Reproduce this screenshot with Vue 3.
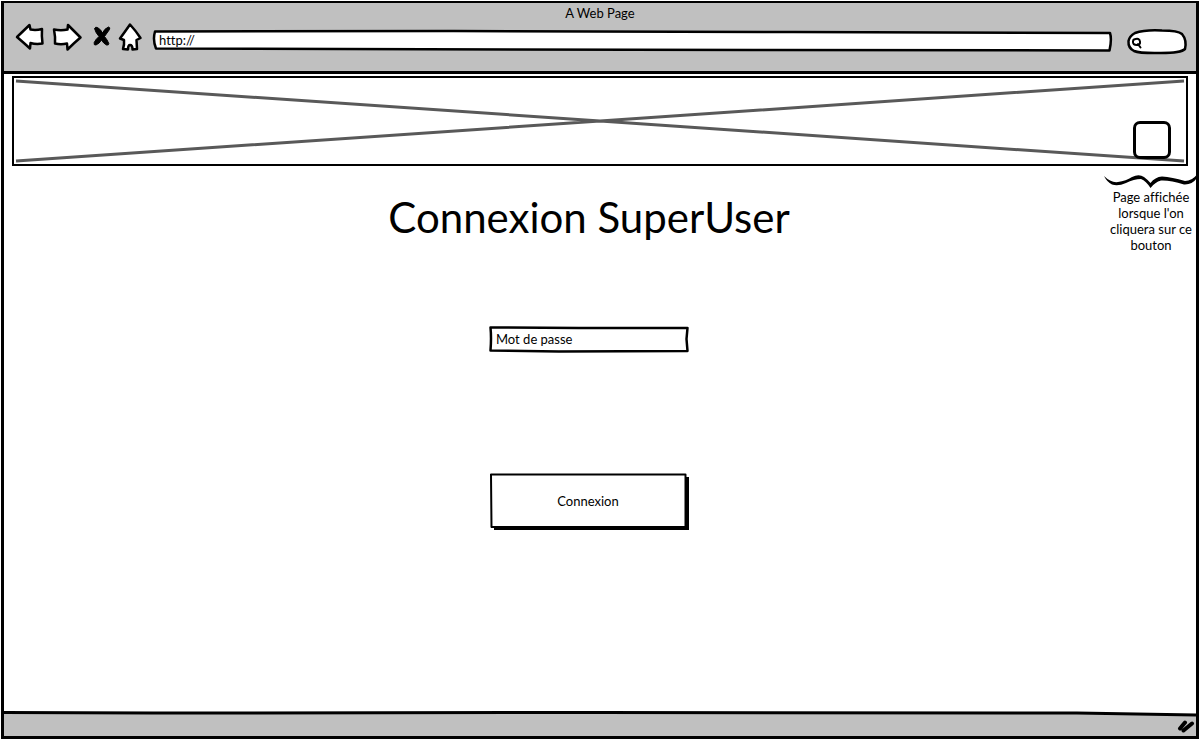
<script setup>
import { ref } from 'vue'

const address = ref('http://')
const query = ref('')
const password = ref('')
</script>

<template>
  <div class="window">
    <header class="chrome">
      <div class="title">A Web Page</div>
      <div class="toolbar">
        <nav class="nav" aria-label="Navigation">
          <button type="button" aria-label="Back">
            <svg width="30" height="28" viewBox="0 0 30 28">
              <path d="M2 14 L14.500 2 L15.500 6.500 Q21 7.500 27 6 Q26.500 13 27.500 20.500 Q21 21.500 15.500 20 L15 25.500 Q9 20 2 14Z" />
            </svg>
          </button>
          <button type="button" aria-label="Forward">
            <svg width="30" height="28" viewBox="1 0 30 28">
              <path d="M2 6.500 Q9 8 15.500 6.500 L16 2 L28.500 14.500 Q22 20 15.500 26.500 L15 20.500 Q9 22 3 20.500 Q3.500 14 2 6.500Z" />
            </svg>
          </button>
          <button type="button" aria-label="Stop">
            <svg width="20" height="28" viewBox="-2 0 20 28">
              <path class="solid" d="M1.500 5.500 Q2.500 3.500 4.500 4.500 Q8 6.500 9.500 10 Q11.500 5.500 15.500 4 Q17.500 4.500 16.500 6.500 L11.500 13.500 Q14.500 17 15.800 20.500 Q15.800 22.500 13.500 22 Q10.500 20.500 8.500 17 Q6.500 20.500 3 22 Q0.500 22.500 1.200 19.500 Q2.500 16.500 6 13.500 Q2.500 9.500 1.500 5.500Z" />
            </svg>
          </button>
          <button type="button" aria-label="Home">
            <svg width="23" height="28" viewBox="1 0 23 28">
              <path d="M12 1.500 Q7.500 8 2 15.500 L6 17 Q6.500 22 5 26 L10 26.500 Q10 22 12 22 Q14.500 22 14.500 26.500 L19 26 L18.500 17 L22.500 15 Q18 8 12 1.500Z" />
            </svg>
          </button>
        </nav>
        <label class="address">
          <svg class="outline" viewBox="0 0 958 22" preserveAspectRatio="none" aria-hidden="true">
            <path d="M2 1.500 L300 1 L640 2 L956 3 Q958 9 955.500 20.500 L600 20 L3 18.500 Q-0.500 10 2 1.500Z" />
          </svg>
          <input v-model="address" type="text" aria-label="Address" />
        </label>
        <label class="search">
          <svg class="outline" viewBox="0 0 60 26" preserveAspectRatio="none" aria-hidden="true">
            <path d="M8 4 Q18 0.500 35 1.500 Q51 1.500 55 5 Q60 11 58 20 Q54 24 34 24 Q13 24.500 7 22 Q1 19 1.500 12 Q2.500 7 8 4Z" />
          </svg>
          <svg class="lens" width="12" height="13" viewBox="0 0 12 13" aria-hidden="true">
            <path d="M3 2.500 Q8.500 0.500 9 4.500 Q9.500 8 6 8 Q1.500 8 2 4.500 Q2 3 3 2.500 M7 7 L9.500 10.500" />
          </svg>
          <input v-model="query" type="text" aria-label="Search" />
        </label>
      </div>
    </header>

    <main class="page">
      <section class="banner">
        <svg class="cross" viewBox="0 0 1176 90" preserveAspectRatio="none" aria-hidden="true">
          <path d="M4 5 L588 45 L1172 85 M4 85 L588 45 L1172 5" />
        </svg>
        <button type="button" class="access" aria-label="SuperUser"></button>
      </section>

      <div class="body">
        <form class="login" @submit.prevent>
          <h1>Connexion SuperUser</h1>
          <label class="password">
            <svg class="outline" viewBox="0 0 200 27" preserveAspectRatio="none" aria-hidden="true">
              <path d="M1.500 1.500 L90 2 L198.500 2 L197.500 13 L198.500 25 L70 25.500 L1.500 24.500 Q2.500 12 1.500 1.500Z" />
            </svg>
            <input v-model="password" type="text" placeholder="Mot de passe" aria-label="Mot de passe" />
          </label>
          <button type="submit" class="submit">
            <svg class="outline" viewBox="0 0 199 57" preserveAspectRatio="none" aria-hidden="true">
              <path class="shadow" d="M4 4 L199 4 L199 57 L4 57Z" />
              <path d="M1 1.500 L195.500 1.500 L195.500 54 L1.500 54Z" />
            </svg>
            <span>Connexion</span>
          </button>
        </form>

        <aside class="note">
          <svg width="93" height="15" viewBox="0 0 93 15" aria-hidden="true">
            <path d="M0 2 Q7 9 14 8 Q22 7 28 3 Q35 -0.500 40 3 Q44 6 46.500 9 Q51 3 58 2.500 Q68 3 81 7 Q88 7 93 0.500 L93 4 Q88 11 80 10.500 Q66 6 57 6.500 Q51 8 46.500 14 Q42 7 37 5 Q30 5 22 9 Q14 12.500 8 10.500 Q3 8 0 2Z" />
          </svg>
          <p>Page affichée lorsque l'on cliquera sur ce bouton</p>
        </aside>
      </div>
    </main>

    <footer class="status">
      <svg class="edge" viewBox="0 0 1200 6" preserveAspectRatio="none" aria-hidden="true">
        <path class="paper" d="M0 0 L1200 0 L1200 4 L1080 2 L600 1 L0 2Z" />
        <path d="M0 1.500 L150 2 L600 1.500 L1080 2 L1200 4" />
      </svg>
      <svg class="grip" width="20" height="14" viewBox="0 0 20 14" aria-hidden="true">
        <path d="M4 9.500 L9 3.500 M7.500 11.500 L16 4.500" />
      </svg>
    </footer>
  </div>
</template>

<style>
body {
  margin: 0;
  background: #fff;
}
</style>

<style scoped>
.window {
  box-sizing: border-box;
  min-height: 100vh;
  display: flex;
  flex-direction: column;
  padding: 1px;
  color: #000;
  font-family: Lato, "Open Sans", sans-serif;
  font-size: 13px;
  line-height: 16px;
  font-variant-ligatures: none;
}

.window > * {
  border: solid #000;
  border-width: 0 3px;
}

button,
input {
  margin: 0;
  padding: 0;
  border: 0;
  background: none;
  color: inherit;
  font: inherit;
  font-variant-ligatures: none;
}

input {
  outline: 0;
}

.window .chrome {
  border-width: 2px 3px 3px;
  background: #c0c0c0;
  height: 68px;
}

.title {
  padding-top: 2px;
  text-align: center;
}

.toolbar {
  display: flex;
  align-items: center;
  gap: 11px;
  padding: 0 9px 0 11px;
}

.nav {
  display: flex;
  gap: 8px;
  flex: none;
  margin-bottom: 2px;
}

.nav button {
  display: block;
  height: 28px;
}

.nav svg {
  display: block;
  overflow: visible;
  fill: #fff;
  stroke: #000;
  stroke-width: 2.5;
  stroke-linejoin: round;
}

.nav .solid {
  fill: #000;
  stroke-width: 1;
}

.outline {
  position: absolute;
  inset: 0;
  width: 100%;
  height: 100%;
  overflow: visible;
  fill: #fff;
  stroke: #000;
  stroke-width: 2.5;
  stroke-linejoin: round;
}

.outline path,
.cross path,
.edge path {
  vector-effect: non-scaling-stroke;
}

.address {
  position: relative;
  flex: 1;
  height: 22px;
  margin-top: 6px;
}

.address input {
  position: relative;
  display: block;
  width: 100%;
  height: 20px;
  padding-left: 6px;
  box-sizing: border-box;
}

.search {
  position: relative;
  display: flex;
  align-items: center;
  flex: none;
  width: 60px;
  height: 26px;
  margin: 8px 0 0 4px;
}

.lens {
  position: relative;
  margin: 2px 0 0 4px;
  flex: none;
  fill: none;
  stroke: #000;
  stroke-width: 2;
  stroke-linecap: round;
}

.search input {
  position: relative;
  width: 36px;
}

.page {
  flex: 1;
  display: flex;
  flex-direction: column;
}

.banner {
  position: relative;
  display: flex;
  justify-content: flex-end;
  align-items: flex-end;
  box-sizing: border-box;
  height: 90px;
  margin: 2px 8px 0;
  padding: 0 15px 5px;
  border: 2px solid #000;
}

.cross {
  position: absolute;
  inset: -2px;
  width: calc(100% + 4px);
  height: 90px;
  fill: none;
  stroke: #595959;
  stroke-width: 3;
}

.access {
  position: relative;
  width: 38px;
  height: 38px;
  border: 3px solid #000;
  border-radius: 7px;
}

.body {
  display: grid;
  grid-template-columns: 1fr 92px;
}

.login {
  grid-area: 1 / 1 / 2 / 3;
  display: flex;
  flex-direction: column;
  align-items: center;
  padding: 26px 22px 0 0;
}

h1 {
  margin: 0;
  font-size: 42px;
  line-height: 50px;
  font-weight: 400;
}

.password {
  position: relative;
  width: 200px;
  height: 27px;
  margin-top: 84px;
}

.password input {
  position: relative;
  display: block;
  box-sizing: border-box;
  width: 100%;
  height: 25px;
  padding-left: 7px;
}

.password input::placeholder {
  color: #000;
  opacity: 1;
}

.submit {
  position: relative;
  width: 199px;
  height: 57px;
  margin-top: 120px;
  padding: 0 2px 2px 0;
}

.submit .outline {
  stroke-width: 2;
}

.submit .shadow {
  fill: #000;
  stroke: none;
}

.submit span {
  position: relative;
}

.note {
  grid-area: 1 / 2 / 2 / 3;
  padding-top: 8px;
  text-align: center;
}

.note svg {
  display: block;
}

.note p {
  margin: 0 -2px 0 0;
}

.window .status {
  position: relative;
  display: flex;
  justify-content: flex-end;
  align-items: center;
  height: 25px;
  border-width: 0 3px 3px;
  background: #c0c0c0;
}

.edge {
  position: absolute;
  inset: 0;
  width: 100%;
  height: 6px;
  overflow: visible;
  fill: none;
  stroke: #000;
  stroke-width: 3;
}

.edge .paper {
  fill: #fff;
  stroke: none;
}

.grip {
  margin-top: 4px;
  fill: none;
  stroke: #000;
  stroke-width: 4;
  stroke-linecap: round;
}
</style>
